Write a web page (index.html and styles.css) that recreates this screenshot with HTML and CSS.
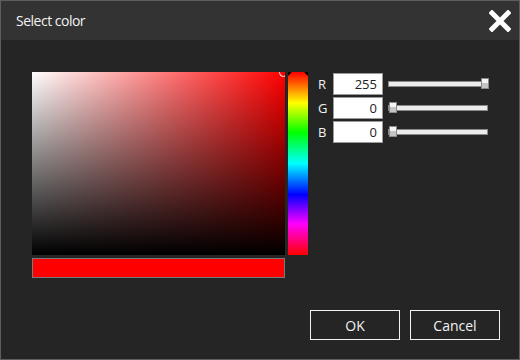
FILE: index.html
```html
<!DOCTYPE html>
<html>
<head>
<meta charset="utf-8">
<link rel="stylesheet" href="styles.css">
</head>
<body>
<div class="window">
  <div class="titlebar">
    <span class="title">Select color</span>
    <svg class="close" width="22" height="22" viewBox="0 0 22 22"><path d="M3 3 L19 19 M19 3 L3 19" stroke="#fff" stroke-width="5" stroke-linecap="square"/></svg>
  </div>
  <div class="content">
    <div class="top">
      <div class="picker">
        <div class="pickrow">
          <div class="sv"><div class="sv-white"></div><div class="sv-black"></div><div class="ring"></div></div>
          <div class="hue"><span class="tri tri-l"></span><span class="tri tri-r"></span></div>
        </div>
        <div class="preview"></div>
      </div>
      <div class="channels">
        <div class="chan"><span class="lbl">R</span><div class="num">255</div><div class="track"><span class="thumb" style="left:92px"></span></div></div>
        <div class="chan"><span class="lbl">G</span><div class="num">0</div><div class="track"><span class="thumb" style="left:0px"></span></div></div>
        <div class="chan"><span class="lbl">B</span><div class="num">0</div><div class="track"><span class="thumb" style="left:0px"></span></div></div>
      </div>
    </div>
    <div class="buttons">
      <button class="btn">OK</button>
      <button class="btn">Cancel</button>
    </div>
  </div>
</div>
</body>
</html>
```
FILE: styles.css
```css
* { box-sizing: border-box; }
html, body { margin: 0; padding: 0; background: #252525; }
body { font-family: "Open Sans", "Noto Sans", sans-serif; }
.window {
  width: 520px; height: 360px;
  border: 1px solid #5e5e5e;
  background: #252525;
  display: flex; flex-direction: column;
}
.titlebar {
  height: 39px; background: #333333;
  display: flex; align-items: center; justify-content: space-between;
  padding: 0 8px 0 15px;
}
.title { color: #f2f2f2; font-size: 14px; letter-spacing: -0.5px; }
.close { display: block; margin-top: 1px; }
.content {
  flex: 1; display: flex; flex-direction: column;
  padding: 32px 19px 19px 31px;
}
.top { display: flex; }
.picker { width: 276px; display: flex; flex-direction: column; gap: 3px; }
.pickrow { display: flex; gap: 3px; height: 183px; }
.sv {
  width: 253px; height: 183px; position: relative; overflow: hidden;
  background: #ff0000;
}
.sv-white { position: absolute; inset: 0; background: linear-gradient(to right, #fff, rgba(255,255,255,0)); }
.sv-black { position: absolute; inset: 0; background: linear-gradient(to bottom, rgba(0,0,0,0), #000); }
.ring {
  position: absolute; width: 9px; height: 9px; border-radius: 50%;
  border: 1.5px solid #fff; right: -3px; top: -4px;
}
.hue {
  width: 20px; height: 183px; position: relative;
  background: linear-gradient(to bottom, #ff0000 0%, #ffff00 17%, #00ff00 33%, #00ffff 50%, #0000ff 67%, #ff00ff 83%, #ff0000 100%);
}
.tri { position: absolute; top: 0; width: 0; height: 0; }
.tri-l { left: 0; border-top: 4px solid #000; border-right: 4px solid transparent; }
.tri-r { right: 0; border-top: 4px solid #000; border-left: 4px solid transparent; }
.preview { width: 253px; height: 20px; background: #ff0000; border: 1px solid #7a7a7a; }
.channels { margin-left: 10px; padding-top: 1px; display: flex; flex-direction: column; gap: 2px; }
.chan { display: flex; align-items: center; height: 22px; }
.lbl { width: 15px; color: #f2f2f2; font-size: 13px; }
.num {
  width: 50px; height: 22px; background: #fff; border: 1px solid #9a9a9a;
  color: #222; font-size: 13px; text-align: right; padding-right: 5px; line-height: 20px;
}
.track {
  position: relative; margin-left: 5px; width: 100px; height: 6px;
  background: #ececec; border: 1px solid #8a8a8a;
}
.thumb {
  position: absolute; top: -4px; width: 8px; height: 11px;
  border: 1px solid #8a8a8a;
  background: linear-gradient(to bottom, #f4f4f4 0 45%, #c4c4c4 45% 100%);
}
.buttons { margin-top: auto; display: flex; justify-content: flex-end; gap: 10px; }
.btn {
  width: 90px; height: 30px; background: transparent; color: #f2f2f2;
  border: 1px solid #f2f2f2; font-family: "Open Sans", "Noto Sans", sans-serif; font-size: 14px;
  padding: 0;
}
```
